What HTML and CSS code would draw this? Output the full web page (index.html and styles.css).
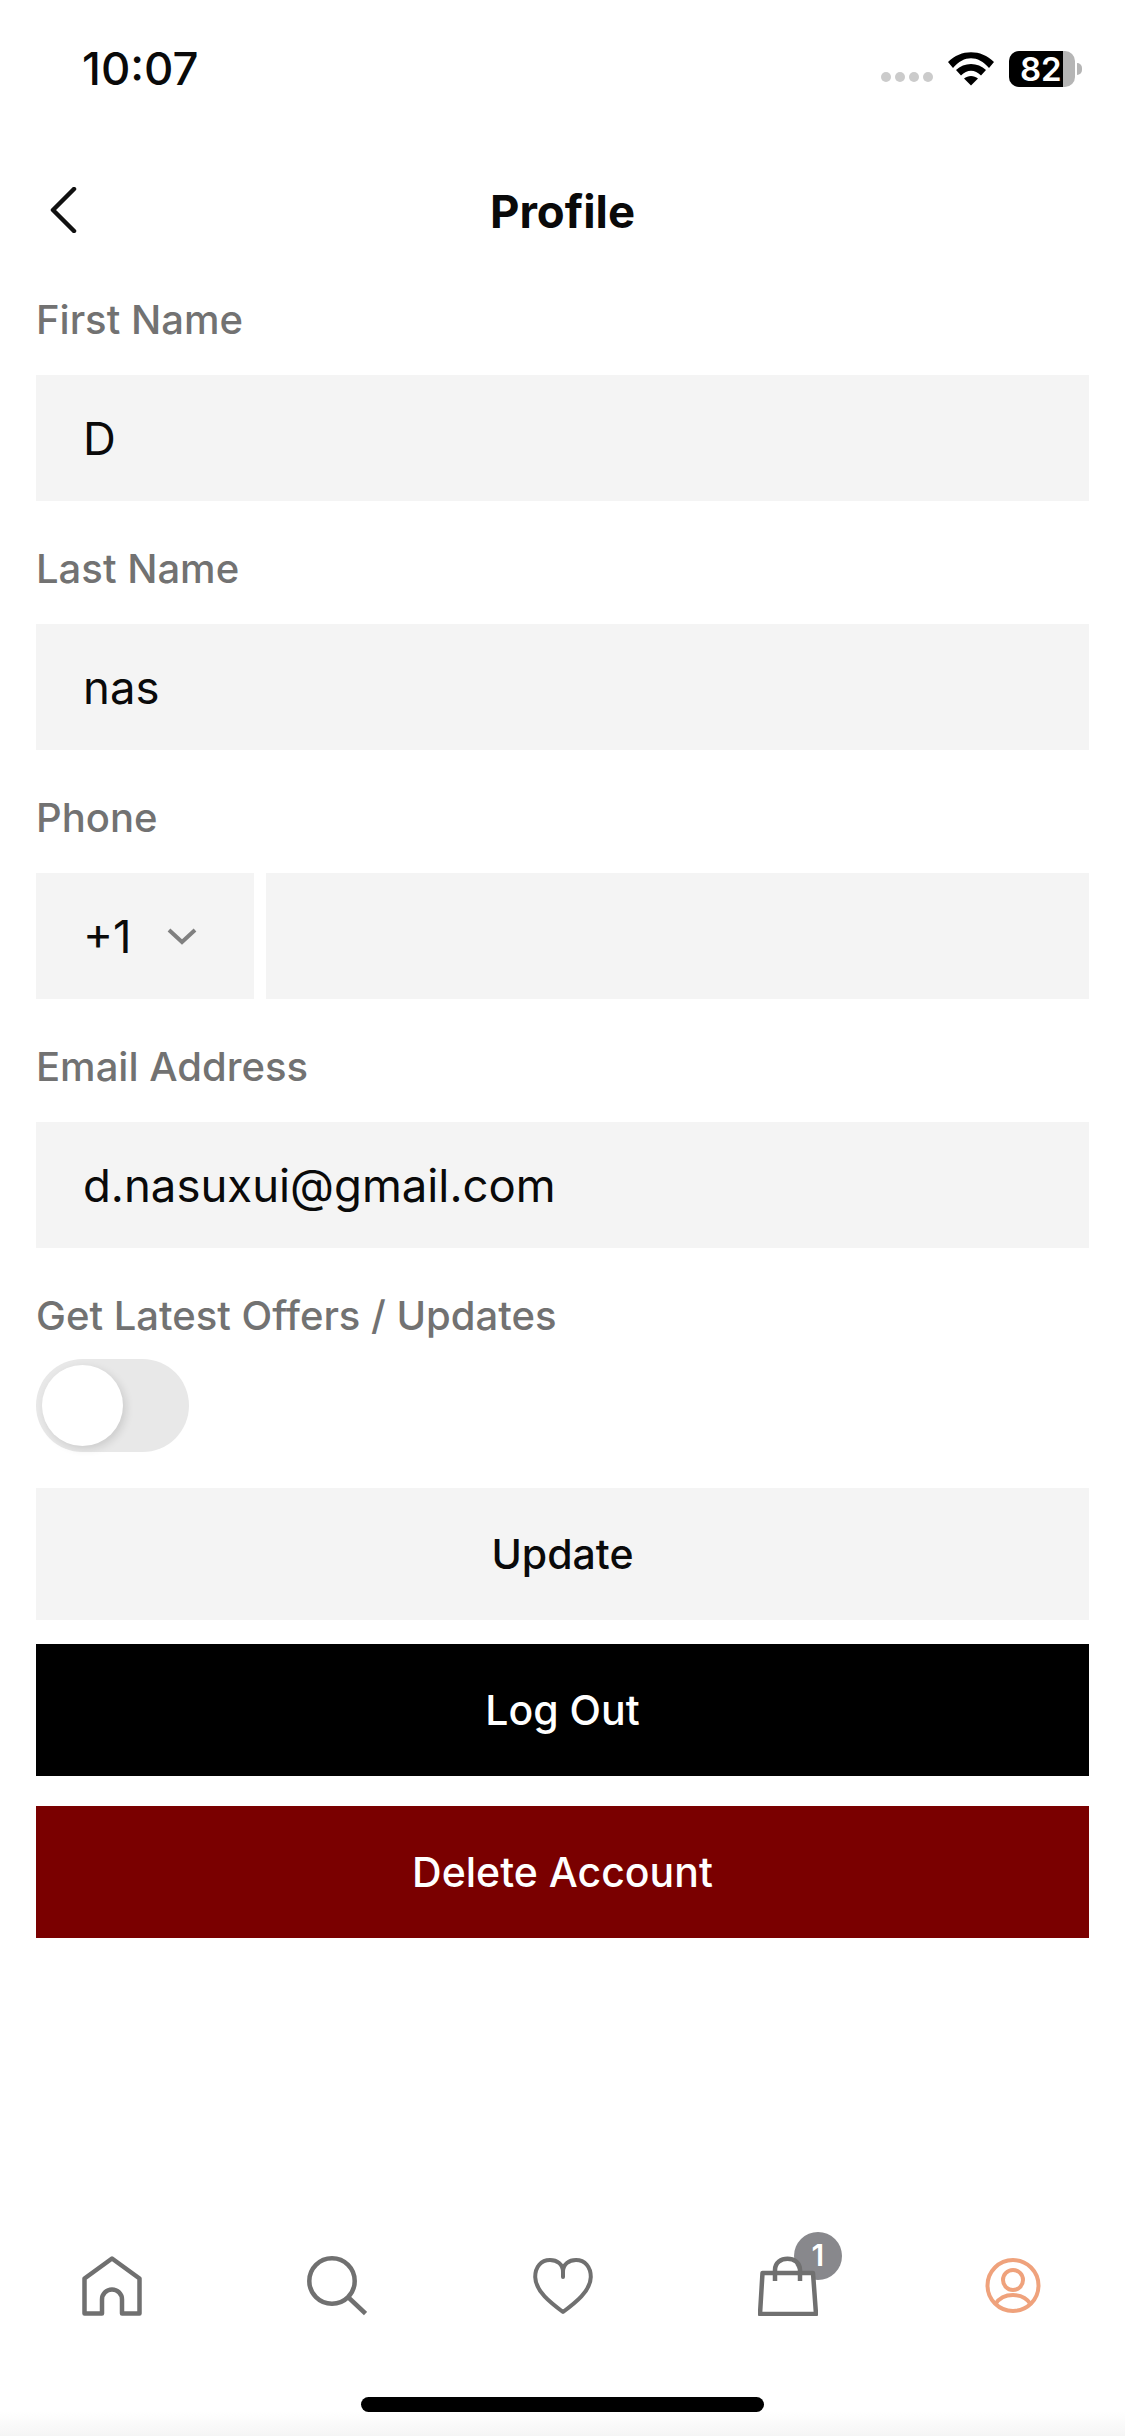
FILE: index.html
```html
<!DOCTYPE html>
<html lang="en">
<head>
    <meta charset="UTF-8">
    <meta name="viewport" content="width=device-width, initial-scale=1.0">
    <title>Profile</title>
    <link rel="stylesheet" href="styles.css">
</head>
<body>

<div id="screen">
    <div class="status-bar">
        <span class="clock">10:07</span>
        <div class="status-icons">
            <div class="signal"><i></i><i></i><i></i><i></i></div>
            <svg class="wifi" width="46" height="34" viewBox="0 0 46 34">
                <path d="M0 10C13 -3 33 -3 46 10L41 16C30 3 16 3 5 16Z" fill="#000"/>
                <path d="M8 18C16 10 30 10 38 18L33 23.500C27 17 19 17 13 23.500Z" fill="#000"/>
                <path d="M16 26.500C20 23 26 23 30 26.500L23 33.500Z" fill="#000"/>
            </svg>
            <div class="battery"><span class="battery-level">82</span></div>
            <div class="battery-cap"></div>
        </div>
    </div>

    <header class="top-bar">
        <svg class="back" width="30" height="46" viewBox="0 0 30 46">
            <path d="M26 2L5 23L26 44" fill="none" stroke="#111" stroke-width="4.500" stroke-linecap="round" stroke-linejoin="round"/>
        </svg>
        <h1>Profile</h1>
    </header>

    <main class="form">
        <div class="field">
            <label>First Name</label>
            <div class="input">D</div>
        </div>
        <div class="field">
            <label>Last Name</label>
            <div class="input">nas</div>
        </div>
        <div class="field">
            <label>Phone</label>
            <div class="phone-row">
                <div class="input country">
                    +1
                    <svg width="30" height="18" viewBox="0 0 30 18">
                        <path d="M2 3L15 15L28 3" fill="none" stroke="#808080" stroke-width="4"/>
                    </svg>
                </div>
                <div class="input phone-number"></div>
            </div>
        </div>
        <div class="field">
            <label>Email Address</label>
            <div class="input">d.nasuxui@gmail.com</div>
        </div>
        <div class="field offers">
            <label>Get Latest Offers / Updates</label>
            <div class="toggle"><div class="knob"></div></div>
        </div>

        <button class="btn btn-update">Update</button>
        <button class="btn btn-logout">Log Out</button>
        <button class="btn btn-delete">Delete Account</button>
    </main>

    <nav class="tab-bar">
        <svg width="60" height="60" viewBox="0 0 60 60">
            <path d="M30 2.500L57.500 22.500V57.500H40V43.500A10 10 0 0 0 20 43.500V57.500H2.500V22.500Z" fill="none" stroke="#707070" stroke-width="4.500" stroke-linejoin="round"/>
        </svg>
        <svg width="60" height="60" viewBox="0 0 60 60">
            <circle cx="25" cy="25" r="22.700" fill="none" stroke="#707070" stroke-width="4.500"/>
            <path d="M42 42L58.500 57.500" fill="none" stroke="#707070" stroke-width="4.500"/>
        </svg>
        <svg width="60" height="60" viewBox="0 0 60 60">
            <path d="M30 21V16C30 8 24 4 17 4C8 4 2.200 11 2.200 21C2.200 35 18 47 30 56C42 47 57.800 35 57.800 21C57.800 11 52 4 43 4C36 4 30 8 30 16" fill="none" stroke="#707070" stroke-width="4" stroke-linejoin="round" stroke-linecap="round"/>
        </svg>
        <div class="cart">
            <span class="cart-badge">1</span>
            <svg class="cart-icon" width="60" height="60" viewBox="0 0 60 60">
                <path d="M4.500 17H55L58 58H2Z" fill="white" stroke="#707070" stroke-width="4.500" stroke-linejoin="round"/>
                <path d="M17 25V14C17 -1 42 -1 42 14V25" fill="none" stroke="#707070" stroke-width="4.500"/>
            </svg>
        </div>
        <svg width="60" height="60" viewBox="0 0 60 60">
            <circle cx="30" cy="29.500" r="25.500" fill="none" stroke="#efa27c" stroke-width="4"/>
            <circle cx="30" cy="24" r="10" fill="none" stroke="#efa27c" stroke-width="4"/>
            <path d="M12.500 48C20 36 40 36 47.500 48" fill="none" stroke="#efa27c" stroke-width="4"/>
        </svg>
    </nav>

    <div class="home-indicator"></div>
</div>

</body>
</html>
```

FILE: styles.css
```css
* {
  box-sizing: border-box;
  margin: 0;
  padding: 0;
}

html, body {
  width: 100%;
  height: 100%;
  background: white;
  font-family: Inter, "Liberation Sans", sans-serif;
}

#screen {
  display: flex;
  flex-direction: column;
  height: 2436px;
  overflow: hidden;
  background: linear-gradient(to bottom, white 2412px, #f5f5f5);
}

/* Status bar */
.status-bar {
  height: 128px;
  padding: 43px 43px 0 82px;
  display: flex;
  justify-content: space-between;
  align-items: flex-start;
}

.clock {
  font-size: 45.500px;
  line-height: 52px;
  font-weight: 500;
  color: #0a0a0a;
}

.status-icons {
  display: flex;
  align-items: center;
  height: 52px;
}

.signal {
  display: flex;
  gap: 4px;
  margin: 16px 15px 0 0;
}

.signal i {
  width: 10px;
  height: 10px;
  border-radius: 50%;
  background: #cbcbcb;
}

.wifi {
  margin-right: 15px;
}

.battery {
  width: 66px;
  height: 36px;
  border-radius: 10px;
  background: #b5b5b5;
}

.battery-level {
  display: block;
  width: 54px;
  height: 36px;
  padding-left: 11px;
  border-radius: 10px 0 0 10px;
  background: black;
  color: white;
  font-size: 33px;
  line-height: 36px;
  font-weight: 600;
  white-space: nowrap;
}

.battery-cap {
  width: 5px;
  height: 12px;
  margin-left: 2px;
  border-radius: 0 6px 6px 0;
  background: #b5b5b5;
}

/* Header */
.top-bar {
  height: 167px;
  display: grid;
  grid-template-columns: 1fr auto 1fr;
  align-items: center;
}

.top-bar h1 {
  font-size: 45.500px;
  font-weight: 700;
  color: #0a0a0a;
}

.back {
  margin: 0 0 3px 48px;
}

/* Form */
.form {
  flex: 1;
  padding: 0 36px;
}

.field {
  margin-bottom: 43px;
}

.field label {
  display: block;
  height: 80px;
  font-size: 40px;
  line-height: 50px;
  font-weight: 500;
  color: #727272;
}

.input {
  height: 126px;
  padding-left: 47px;
  display: flex;
  align-items: center;
  background: #f4f4f4;
  font-size: 45.500px;
  color: #0a0a0a;
}

.phone-row {
  display: flex;
  gap: 12px;
}

.country {
  width: 218px;
  gap: 35px;
}

.phone-number {
  flex: 1;
}

.offers {
  margin-bottom: 36px;
}

.offers label {
  height: 68px;
}

.toggle {
  width: 153px;
  height: 93px;
  border-radius: 47px;
  background: #e8e8e8;
  padding: 6px;
}

.knob {
  width: 81px;
  height: 81px;
  border-radius: 50%;
  background: white;
  box-shadow: 3px 3px 8px rgba(0, 0, 0, 0.12);
}

.btn {
  display: block;
  width: 100%;
  height: 132px;
  border: none;
  font-family: inherit;
  font-size: 41px;
  font-weight: 500;
}

.btn-update {
  background: #f4f4f4;
  color: #0a0a0a;
  margin-bottom: 24px;
}

.btn-logout {
  background: black;
  color: white;
  margin-bottom: 30px;
}

.btn-delete {
  background: #7a0000;
  color: white;
}

/* Bottom tabs */
.tab-bar {
  height: 141px;
  padding: 0 82px;
  display: flex;
  justify-content: space-between;
  align-items: flex-start;
  flex-shrink: 0;
}

.tab-bar svg {
  display: block;
}

.cart {
  position: relative;
}

.cart-icon {
  position: relative;
}

.cart-badge {
  position: absolute;
  left: 36px;
  top: -24px;
  width: 48px;
  height: 48px;
  border-radius: 50%;
  background: #88888c;
  color: white;
  font-size: 30px;
  line-height: 46px;
  font-weight: 600;
  text-align: center;
}

.home-indicator {
  width: 403px;
  height: 15px;
  margin: 0 auto 24px;
  border-radius: 8px;
  background: black;
  flex-shrink: 0;
}
```
